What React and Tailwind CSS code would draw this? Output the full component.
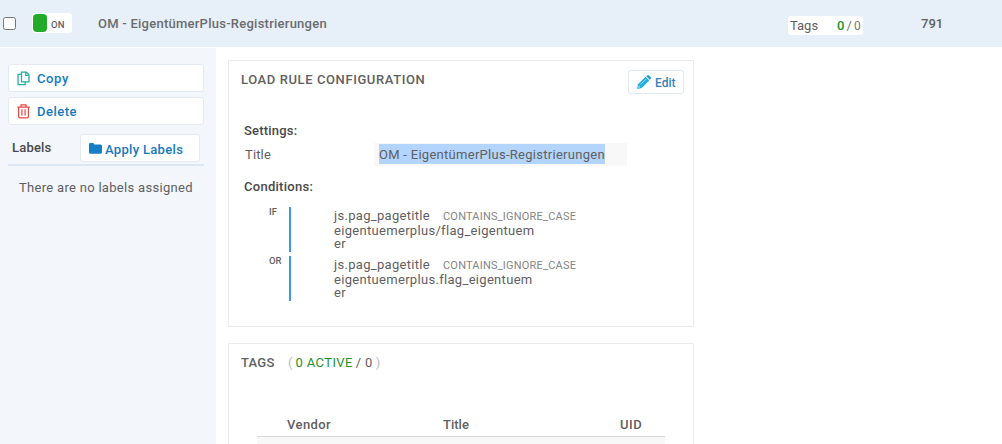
import React from "react";

function CopyIcon() {
  return (
    <svg width="13" height="15" viewBox="0 0 13 15" fill="none" stroke="#22b0a0" strokeWidth="1.25">
      <path d="M4.5 1H9.3L12 3.7V10.8H4.5Z" />
      <path d="M8.7 1V4.3H12" />
      <path d="M4.5 3.3H1V13.6H8.2V10.8" />
    </svg>
  );
}

function TrashIcon() {
  return (
    <svg width="13" height="15" viewBox="0 0 13 15" fill="none" stroke="#e64a46" strokeWidth="1.25">
      <path d="M0.3 3H12.7M4 3V0.9H9V3M1.6 3V12.6Q1.6 13.9 2.8 13.9H10.2Q11.4 13.9 11.4 12.6V3M4.9 5.3V11.5M8.1 5.3V11.5" />
    </svg>
  );
}

function FolderIcon() {
  return (
    <svg width="13" height="11" viewBox="0 0 13 11" fill="#147fc4">
      <path d="M0 1.4Q0 0 1.4 0H4Q5.3 0 5.3 1.5H11.5Q13 1.5 13 2.9V9.3Q13 10.7 11.6 10.7H1.4Q0 10.7 0 9.3Z" />
    </svg>
  );
}

function PencilIcon() {
  return (
    <svg width="14" height="14" viewBox="0 0 14 14">
      <path d="M0.1 13.9L1 9.2L8.5 1.7L12.3 5.5L4.8 13Z" fill="#27b0df" />
      <path d="M9.2 1.2L10.1 0.4Q11.1 -0.4 12.1 0.5L13.5 1.9Q14.4 2.9 13.6 3.9L12.8 4.8Z" fill="#1f9fd4" />
      <path d="M3.6 9.4L8.6 4.4" stroke="#fff" strokeWidth="0.5" />
      <path d="M1.7 10.8L3.2 12.3L1.5 12.6Z" fill="#fff" />
    </svg>
  );
}

function Condition({ op, value }) {
  return (
    <div className="flex h-[49px]">
      <div className="w-[21px] shrink-0 pl-px text-[9.5px] font-medium leading-[9px]">{op}</div>
      <div className="h-[45px] w-[2px] shrink-0 bg-[#3d97ea]" />
      <div className="ml-[43px] pt-[1px]">
        <div className="flex h-[16px] items-center leading-[16px]">
          <span className="w-[109px] tracking-[0.31px]">js.pag_pagetitle</span>
          <span className="mt-[2px] text-[11px] tracking-[0.2px] text-[#858585]">CONTAINS_IGNORE_CASE</span>
        </div>
        <div className="h-[13px] leading-[14px] tracking-[0.31px]">{value}</div>
        <div className="h-[13px] leading-[13px] tracking-[0.3px]">er</div>
      </div>
    </div>
  );
}

export default function App() {
  return (
    <div className="h-[444px] w-[1002px] overflow-hidden whitespace-nowrap bg-white font-['Roboto',sans-serif] text-[13px] text-[#5f6061]">
      <header className="flex h-[47px] bg-[#e7eff8]">
        <div className="ml-[3px] mt-[17px] h-[13px] w-[13px] shrink-0 rounded-[2.5px] border border-[#767676] bg-white" />
        <div className="ml-[16px] mt-[13px] flex h-[20px] w-[40px] shrink-0 items-center rounded-[3px] bg-white pl-[1px]">
          <div className="h-[18px] w-[14px] rounded-[4px] bg-[#22aa2a]" />
          <span className="ml-[4px] mt-[3px] text-[9.5px] font-medium leading-[12px] tracking-[0.3px]">ON</span>
        </div>
        <div className="ml-[26px] mt-[15px] w-[690px] shrink-0 font-medium leading-[18px] tracking-[0.25px] text-[#6a6c6e]">OM - EigentümerPlus-Registrierungen</div>
        <div className="mt-[16px] flex h-[19px] w-[75px] shrink-0 items-center rounded-[3px] bg-white px-[2px] pt-[1px]">
          <span className="w-[47px]">Tags</span>
          <span className="font-medium text-[#25912b]">0</span>
          <span className="ml-[2px] tracking-[0.3px] text-[#777]">/</span>
          <span className="ml-[2px] text-[12px] text-[#777]">0</span>
        </div>
        <div className="ml-[58px] mt-[15px] font-medium leading-[18px]">791</div>
      </header>

      <div className="mt-px flex h-[396px]">
        <aside className="w-[216px] shrink-0 bg-[#f3f7fc] px-[8px] pt-[16px]">
          <button className="flex h-[28px] w-[196px] items-center rounded-[3px] border border-[#e3eaf1] bg-white pl-[8px] font-medium text-[#147abf]">
            <CopyIcon />
            <span className="ml-[7px] mt-[1px] tracking-[0.6px]">Copy</span>
          </button>
          <button className="mt-[5px] flex h-[28px] w-[196px] items-center rounded-[3px] border border-[#e3eaf1] bg-white pl-[8px] font-medium text-[#147abf]">
            <TrashIcon />
            <span className="ml-[7px] mt-[1px] tracking-[0.5px]">Delete</span>
          </button>
          <div className="mt-[9px] flex h-[32px] w-[196px] border-b-2 border-[#dce7f3] pl-[4px]">
            <span className="mt-[5px] w-[68px] font-medium leading-[18px] tracking-[0.2px] text-[#47484a]">Labels</span>
            <button className="flex h-[28px] w-[120px] items-center rounded-[3px] border border-[#e3eaf1] bg-white pl-[8px] font-medium text-[#147abf]">
              <FolderIcon />
              <span className="ml-[3px] mt-[3px] tracking-[0.32px]">Apply Labels</span>
            </button>
          </div>
          <p className="ml-[11px] mt-[13px] leading-[18px] tracking-[0.3px]">There are no labels assigned</p>
        </aside>

        <main className="ml-[12px] w-[466px] pt-[12px]">
          <section className="h-[267px] border border-[#ebebeb] px-[12px]">
            <div className="flex h-[52px] justify-between">
              <h2 className="mt-[10px] font-medium leading-[18px] tracking-[0.59px]">LOAD RULE CONFIGURATION</h2>
              <button className="-mr-[3px] mt-[9px] flex h-[24px] w-[56px] items-center rounded-[3px] border border-[#e1e9f1] bg-white pl-[8px] text-[12px] font-medium text-[#3482bd]">
                <PencilIcon />
                <span className="ml-[4px] mt-px">Edit</span>
              </button>
            </div>
            <h3 className="ml-[3px] mt-[9px] font-medium leading-[18px] tracking-[0.2px] text-[#48494a]">Settings:</h3>
            <div className="ml-[4px] mt-[2px] flex h-[24px]">
              <span className="mt-[4px] w-[129px] leading-[18px] tracking-[0.15px]">Title</span>
              <div className="mt-px h-[23px] w-[253px] bg-[#f8f8f8] pl-[5px] pt-[1px]">
                <div className="h-[20px] w-[226px] bg-[#b3d5fb] leading-[22px] tracking-[0.28px]">OM - EigentümerPlus-Registrierungen</div>
              </div>
            </div>
            <h3 className="ml-[3px] mt-[12px] font-medium leading-[18px] tracking-[0.27px] text-[#48494a]">Conditions:</h3>
            <div className="ml-[27px] mt-[11px]">
              <Condition op="IF" value="eigentuemerplus/flag_eigentuem" />
              <Condition op="OR" value="eigentuemerplus.flag_eigentuem" />
            </div>
          </section>

          <section className="mt-[16px] h-[120px] border border-b-0 border-[#ebebeb]">
            <div className="flex h-[69px] pl-[12px] pt-[10px] leading-[18px]">
              <h2 className="w-[47px] font-medium tracking-[0.25px]">TAGS</h2>
              <span className="text-[#bbb]">(</span>
              <span className="ml-[3px] tracking-[0.4px] text-[#25912b]">0 ACTIVE</span>
              <span className="ml-[3px] tracking-[0.3px]">/ 0</span>
              <span className="ml-[3px] text-[#bbb]">)</span>
            </div>
            <div className="mx-[28px] flex h-[24px] border-b border-[#d8d8d8] pt-[3px] font-medium leading-[18px]">
              <span className="ml-[30px] w-[156px] tracking-[0.4px]">Vendor</span>
              <span className="w-[177px]">Title</span>
              <span className="tracking-[0.5px]">UID</span>
            </div>
            <div className="mx-[28px] h-[20px] bg-[#f8f8f8]" />
          </section>
        </main>
      </div>
    </div>
  );
}
